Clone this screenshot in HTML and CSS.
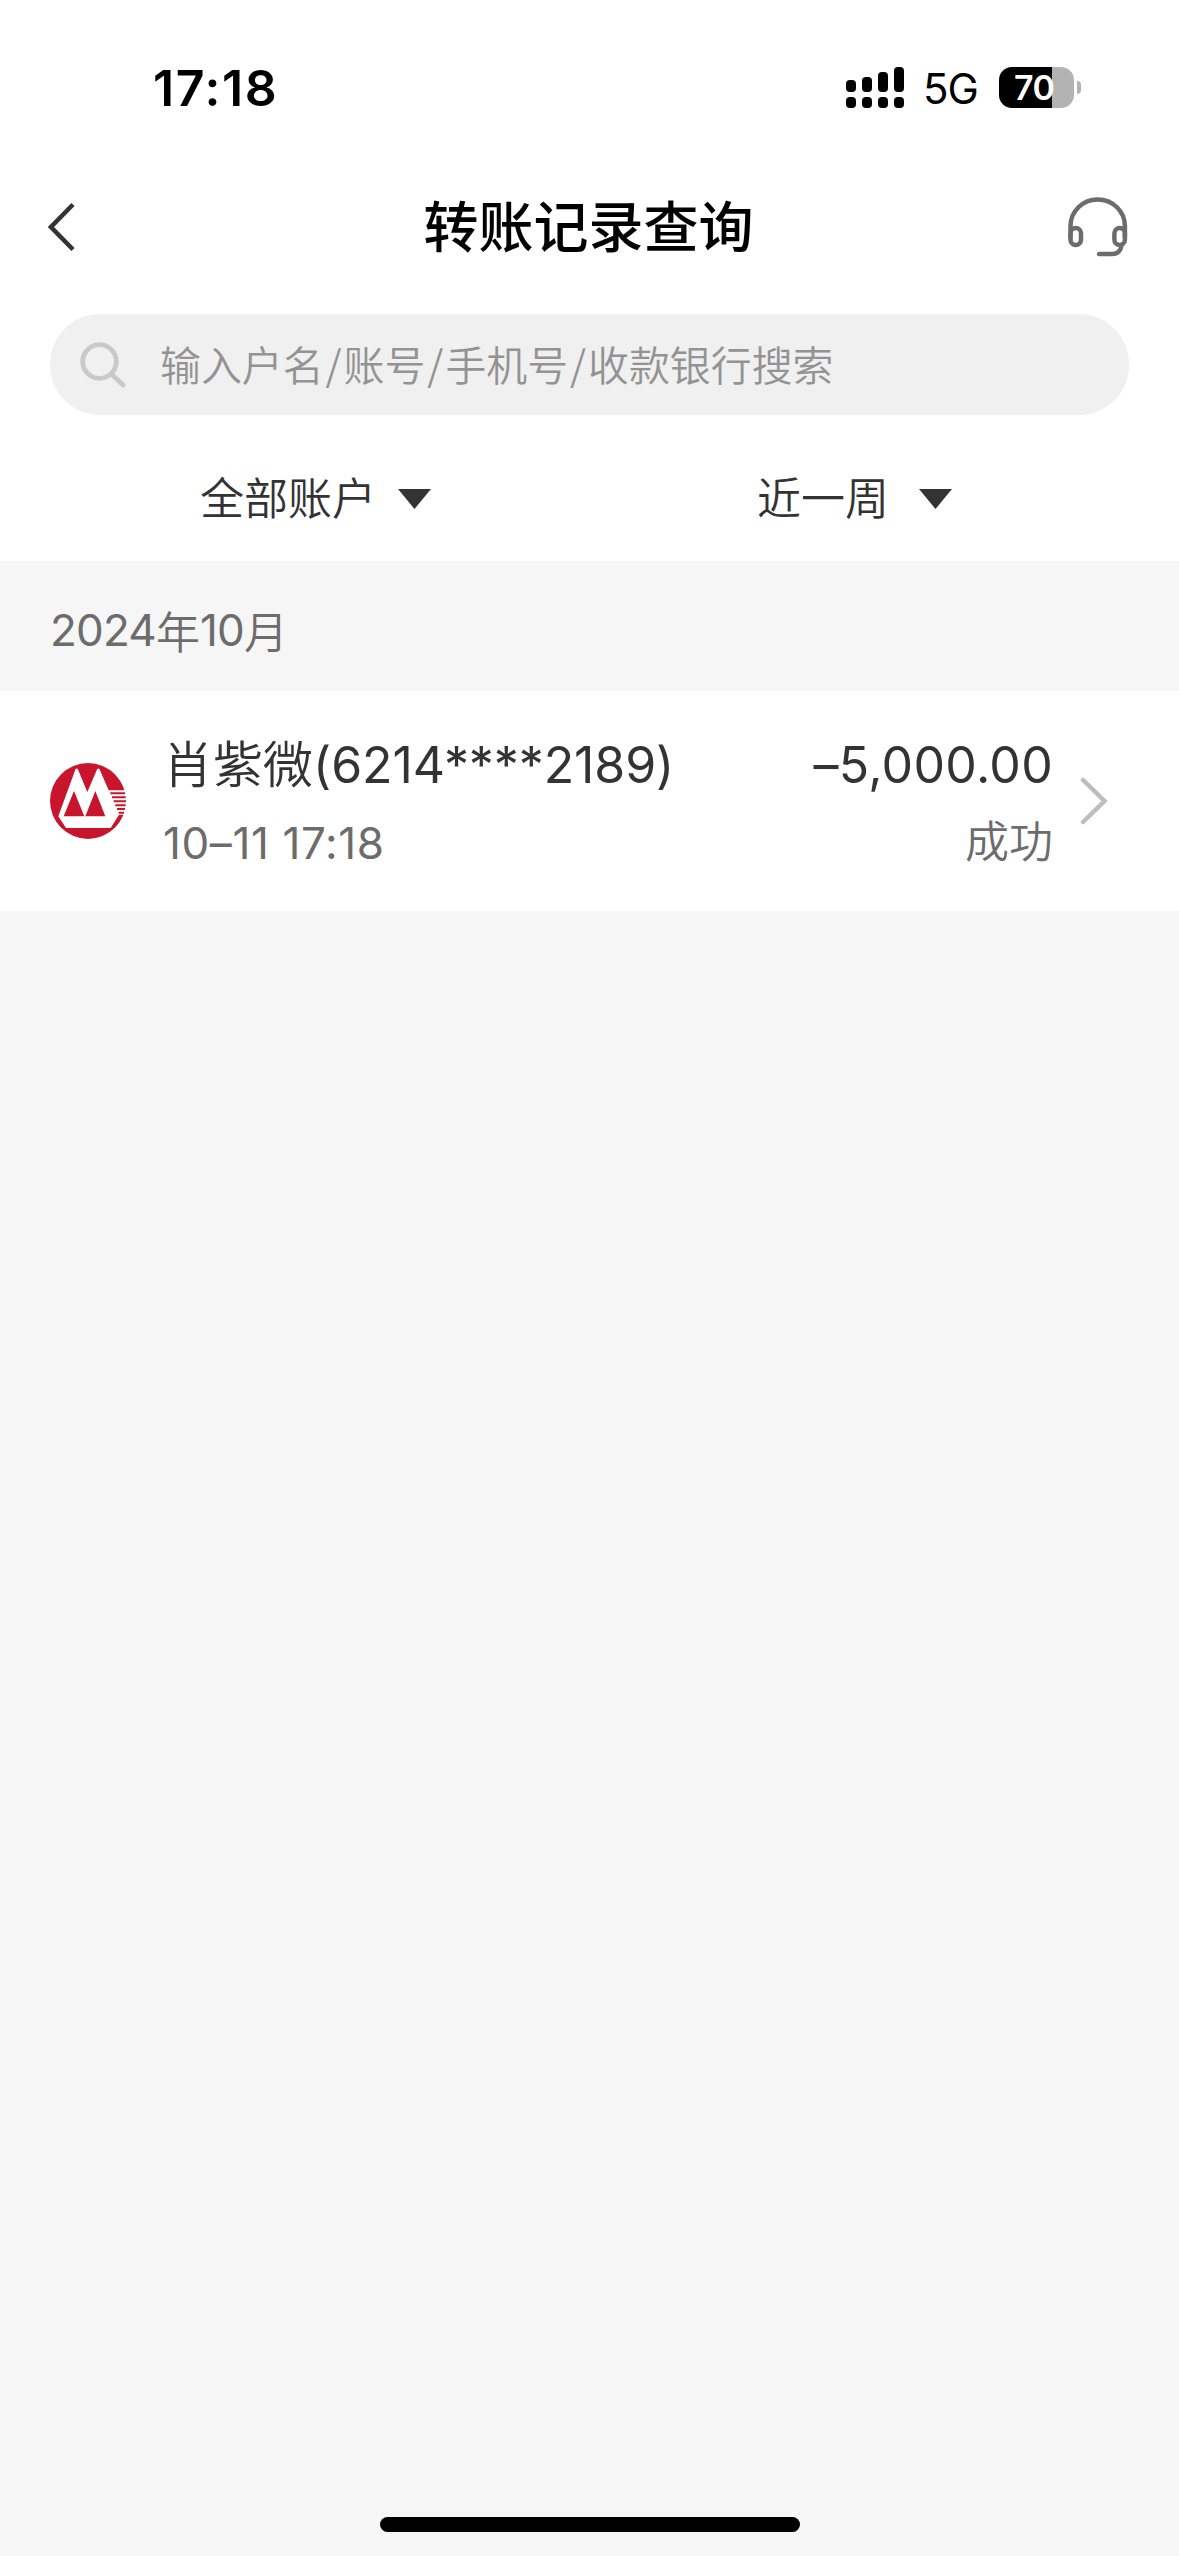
FILE: index.html
```html
<!DOCTYPE html>
<html lang="zh-CN">
<head>
<meta charset="utf-8">
<title>转账记录查询</title>
<link rel="stylesheet" href="styles.css">
</head>
<body>
<div class="screen">
  <div class="status">
    <span class="time">17:18</span>
    <div class="status-right">
      <svg class="signal" viewBox="0 0 58 41">
        <rect x="0" y="13" width="10" height="12" rx="4"/><rect x="16" y="10" width="10" height="15" rx="4"/>
        <rect x="32" y="5" width="10" height="20" rx="4"/><rect x="48" y="0" width="10" height="25" rx="4"/>
        <rect x="0" y="30" width="10" height="11" rx="4"/><rect x="16" y="30" width="10" height="11" rx="4"/>
        <rect x="32" y="30" width="10" height="11" rx="4"/><rect x="48" y="30" width="10" height="11" rx="4"/>
      </svg>
      <span class="network">5G</span>
      <div class="battery">70</div>
      <i class="nub"></i>
    </div>
  </div>

  <header class="nav">
    <svg class="back" viewBox="0 0 28 50"><path d="M25 2.500L3 25L25 47.500"/></svg>
    <h1 class="title">转账记录查询</h1>
    <svg class="service" viewBox="0 0 60 60">
      <path d="M2.500 40V29A27.200 26.500 0 0 1 56.900 29V40"/>
      <rect x="2.500" y="31" width="10.500" height="17" rx="5.200"/>
      <rect x="46.400" y="31" width="10.500" height="17" rx="5.200"/>
      <path d="M53.500 48C53 53 50 57 44.500 57H31"/>
    </svg>
  </header>

  <div class="search">
    <svg class="glass" viewBox="0 0 46 46"><circle cx="19.500" cy="19.500" r="16.800"/><path d="M31.500 32L43 43"/></svg>
    <span class="placeholder">输入户名<i>/</i>账号<i>/</i>手机号<i>/</i>收款银行搜索</span>
  </div>

  <div class="filters">
    <div class="filter account">全部账户<svg class="caret" viewBox="0 0 33 20"><path d="M0 0H33L16.500 20Z"/></svg></div>
    <div class="filter period">近一周<svg class="caret" viewBox="0 0 33 20"><path d="M0 0H33L16.500 20Z"/></svg></div>
  </div>

  <div class="month"><span class="num">2024</span>年<span class="num">10</span>月</div>

  <div class="record">
    <svg class="logo" viewBox="0 0 228 228">
      <circle cx="114" cy="114" r="114" fill="#c8152d"/>
      <path fill="#fff" d="M77 17H83L112 87L142 17H148L176 82H228V155H207L182 195H48L25 160Z"/>
      <path fill="#c8152d" d="M72 84L103 160H41ZM136 84L166 160H106Z"/>
      <path stroke="#c8152d" stroke-width="6" d="M181 91H225M186 103H227M191 115H228M196 127H227M201 138H225M206 149H222"/>
    </svg>
    <div class="info">
      <div class="name">肖紫微<span class="card">(6214****2189)</span></div>
      <div class="date">10–11 17:18</div>
    </div>
    <div class="result">
      <div class="amount">–5,000.00</div>
      <div class="state">成功</div>
    </div>
    <svg class="more" viewBox="0 0 28 48"><path d="M3 3L24.500 24L3 45"/></svg>
  </div>

  <div class="home"></div>
</div>
</body>
</html>
```
FILE: styles.css
```css
* { box-sizing: border-box; }
body { margin: 0; font-family: Inter, "Noto Sans CJK SC", sans-serif; color: #333; background: #f6f6f6; }
i { font-style: normal; }
svg { display: block; flex: none; fill: none; }
.screen { width: 1179px; height: 2556px; display: flex; flex-direction: column; }
.status { height: 175px; padding: 0 98px 0 153px; background: #fff; color: #000; display: flex; justify-content: space-between; align-items: center; }
.time { font-size: 50px; font-weight: 600; line-height: 60px; letter-spacing: 1.6px; }
.status-right { display: flex; align-items: center; }
.signal { width: 58px; height: 41px; fill: #000; margin-right: 19px; }
.network { width: 76px; padding-top: 2px; font-size: 42px; line-height: 48px; letter-spacing: -1px; }
.battery { width: 75px; height: 41px; border-radius: 13px; background: linear-gradient(90deg, #000 53px, #b3b3b3 53px); color: #fff; font-size: 34px; font-weight: 600; line-height: 42px; padding-left: 15px; letter-spacing: -0.5px; }
.nub { width: 4px; height: 13px; margin-left: 3px; border-radius: 0 4px 4px 0; background: #b3b3b3; }
.nav { height: 105px; padding: 0 51px 2px 48px; background: #fff; display: flex; align-items: center; justify-content: space-between; }
.back { width: 28px; height: 50px; stroke: #333; stroke-width: 4.5; }
.title { margin: 0 0 0 33px; font-size: 55px; line-height: 80px; font-weight: 500; color: #000; }
.service { width: 60px; height: 60px; stroke: #6c6c6c; stroke-width: 4.5; stroke-linecap: round; }
.search { height: 135px; padding-left: 30px; border: solid #fff; border-width: 34px 50px 0; background: #fff; display: flex; align-items: center; position: relative; z-index: 0; }
.search::before { content: ""; position: absolute; inset: 0; z-index: -1; border-radius: 50px; background: #f0f0f0; }
.glass { width: 46px; height: 46px; stroke: #c9c9c9; stroke-width: 4.8; stroke-linecap: round; }
.placeholder { margin-left: 34px; padding-bottom: 2px; font-family: "Noto Sans CJK SC", sans-serif; font-size: 40.9px; font-weight: 350; line-height: 60px; color: #939393; white-space: nowrap; }
.placeholder i { display: inline-block; width: 20px; text-align: center; }
.filters { height: 146px; padding-top: 21px; background: #fff; display: grid; grid-template-columns: 558px 1fr; align-items: center; }
.filter { display: flex; align-items: center; font-size: 44px; line-height: 60px; font-weight: 350; }
.account { padding-left: 200px; }
.period { padding-left: 199px; }
.caret { width: 33px; height: 20px; fill: #333; margin-left: 22px; }
.period .caret { margin-left: 30px; }
.month { height: 130px; padding: 8px 0 0 50px; display: flex; align-items: center; font-size: 44px; color: #6c6c6c; font-weight: 350; }
.num { font-weight: 370; letter-spacing: -0.8px; }
.record { height: 220px; padding: 0 71px 0 50px; background: #fff; display: flex; align-items: center; }
.logo { width: 76px; height: 76px; }
.info { flex: 1; margin-left: 37px; padding-top: 4px; }
.name { font-size: 50px; line-height: 80px; font-weight: 350; white-space: nowrap; }
.card { font-weight: 370; letter-spacing: -0.1px; }
.date { font-size: 44px; line-height: 76px; color: #6c6c6c; font-weight: 370; letter-spacing: 0.6px; }
.result { text-align: right; padding-top: 2px; }
.amount { font-size: 50px; line-height: 80px; font-weight: 370; letter-spacing: 0.3px; }
.state { font-size: 44px; line-height: 74px; color: #6c6c6c; font-weight: 350; }
.more { width: 28px; height: 48px; margin-left: 27px; stroke: #bdbdbd; stroke-width: 4.5; stroke-linecap: round; }
.home { width: 420px; height: 15px; border-radius: 8px; background: #000; margin: auto auto 24px 380px; }
```
